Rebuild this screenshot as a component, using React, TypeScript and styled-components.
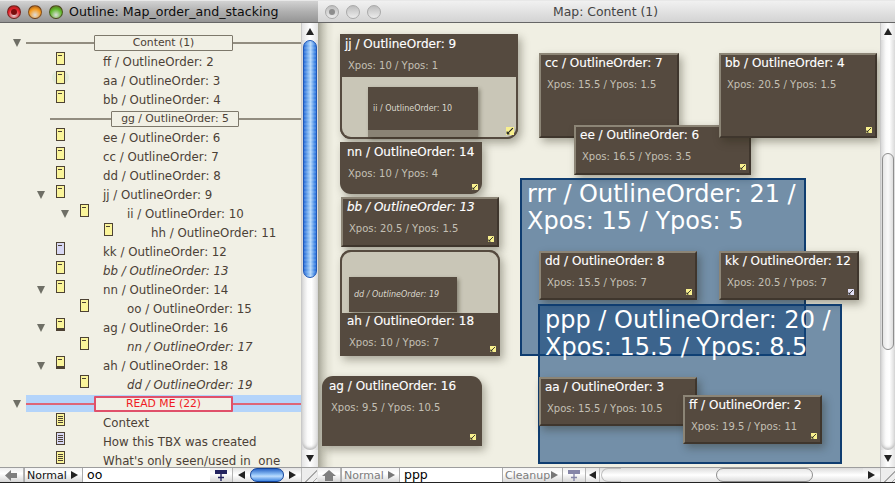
import React from 'react';
import styled, { createGlobalStyle, css } from 'styled-components';

const GlobalStyle = createGlobalStyle`
  html, body { margin: 0; padding: 0; background: #f1f0e5; overflow: hidden; }
  * { box-sizing: border-box; }
  body { font-family: "DejaVu Sans", "Liberation Sans", sans-serif; }
`;

const Screen = styled.div`
  display: flex;
  width: 895px;
  height: 483px;
  overflow: hidden;
`;

const Window = styled.section<{ $w?: number }>`
  display: flex;
  flex-direction: column;
  height: 100%;
  ${p => (p.$w ? `width: ${p.$w}px; flex: none;` : 'flex: 1; min-width: 0;')}
`;

const TitleBar = styled.header<{ $active?: boolean }>`
  flex: none;
  height: 23px;
  display: flex;
  align-items: center;
  padding-left: 7px;
  gap: 7px;
  position: relative;
  border-bottom: 1px solid #666;
  border-top: 1px solid #e8e8e8;
  background: ${p =>
    p.$active
      ? 'linear-gradient(#d2d2d2, #b0b0b0 50%, #959595)'
      : 'linear-gradient(#f1f1f1, #e2e2e2 50%, #d3d3d3)'};
`;

const Light = styled.span<{ $c?: string; $dot?: boolean }>`
  flex: none;
  width: 14px;
  height: 14px;
  border-radius: 50%;
  position: relative;
  border: 1px solid ${p => (p.$c ? 'rgba(60,30,20,.6)' : '#a9a9a9')};
  background: ${p =>
    p.$c
      ? `radial-gradient(circle at 50% 75%, #fff9 0, ${p.$c} 55%, #5a2a1a 115%)`
      : 'linear-gradient(#bdbdbd, #ececec)'};
  ${p =>
    p.$dot &&
    css`
      &::after {
        content: '';
        position: absolute;
        left: 3px;
        top: 3px;
        width: 6px;
        height: 6px;
        border-radius: 50%;
        background: ${p.$c ? '#7a0d0d' : '#8d8d8d'};
      }
    `}
`;

const OutlineTitle = styled.span`
  font-size: 12.6px;
  color: #0c0c0c;
  margin-left: -1px;
  white-space: nowrap;
`;

const MapTitle = styled.span`
  position: absolute;
  left: 0;
  right: 0;
  text-align: center;
  font-size: 12.4px;
  color: #444;
  padding-right: 2px;
`;

const Body = styled.div`
  flex: 1;
  min-height: 0;
  display: flex;
`;

const List = styled.div`
  flex: 1;
  min-width: 0;
  padding-top: 10px;
  overflow: hidden;
  background: #f1f0e5;
`;

const Row = styled.div<{ $depth: number; $italic?: boolean }>`
  height: 19px;
  display: flex;
  align-items: center;
  padding-left: ${p => 13 + p.$depth * 24}px;
  font-size: 11.8px;
  color: #4b4036;
  white-space: pre;
  font-style: ${p => (p.$italic ? 'italic' : 'normal')};
`;

const TriSlot = styled.span<{ $w: number }>`
  flex: none;
  width: ${p => p.$w}px;
  display: flex;
`;

const Twist = styled.span`
  width: 0;
  height: 0;
  border-left: 4.5px solid transparent;
  border-right: 4.5px solid transparent;
  border-top: 8px solid #6f6f66;
`;

const IconSlot = styled.span`
  flex: none;
  width: 47px;
  height: 19px;
  position: relative;
  display: block;
`;

const Halo = styled.span`
  position: absolute;
  left: -4px;
  top: -1px;
  width: 17px;
  height: 15px;
  border-radius: 50%;
  background: #e2eadb;
`;

const NoteSvg = styled.svg`
  position: absolute;
  left: 0;
  top: 0;
  display: block;
`;

const Head = styled.div<{ $depth: number; $read?: boolean; $boxW: number; $lead: number }>`
  height: 19px;
  display: flex;
  align-items: center;
  padding-left: ${p => 13 + p.$depth * 24}px;
  font-size: 10.8px;
  color: ${p => (p.$read ? '#f01b23' : '#4b4036')};
  --rule: ${p => (p.$read ? '#de6577' : '#928d80')};
  --edge: ${p => (p.$read ? '2px solid #e0506a' : '1px solid #7d786b')};
  --lead: ${p => p.$lead}px;
  --box: ${p => p.$boxW}px;
`;

const HeadBand = styled.div<{ $read?: boolean }>`
  flex: 1;
  height: 17px;
  display: flex;
  align-items: center;
  background: ${p => (p.$read ? '#b4d4fa' : 'transparent')};
`;

const Rule = styled.span<{ $fixed?: boolean }>`
  height: 2px;
  background: var(--rule);
  ${p => (p.$fixed ? 'width: var(--lead); flex: none;' : 'flex: 1;')}
`;

const HeadBox = styled.span`
  flex: none;
  width: var(--box);
  height: 16px;
  display: flex;
  align-items: center;
  justify-content: center;
  background: #f1f0e5;
  border: var(--edge);
  border-radius: 1px;
`;

/* scrollbars */
const VTrack = styled.div<{ $w: number }>`
  flex: none;
  width: ${p => p.$w}px;
  display: flex;
  flex-direction: column;
  border-left: 1px solid #c9c9c9;
  background: linear-gradient(90deg, #d8d8d8, #fbfbfb 35%, #fff 60%, #d9d9d9);
`;

const ArrowCell = styled.div`
  flex: none;
  height: 17px;
  display: flex;
  align-items: center;
  justify-content: center;
  background: linear-gradient(90deg, #e4e4e4, #fff 50%, #e4e4e4);
`;

const Arrow = styled.span<{ $dir: 'up' | 'down' | 'left' | 'right'; $c?: string }>`
  width: 0;
  height: 0;
  ${p => {
    const c = p.$c || '#222';
    if (p.$dir === 'up') return `border-left:4px solid transparent;border-right:4px solid transparent;border-bottom:7px solid ${c};`;
    if (p.$dir === 'down') return `border-left:4px solid transparent;border-right:4px solid transparent;border-top:7px solid ${c};`;
    if (p.$dir === 'left') return `border-top:4px solid transparent;border-bottom:4px solid transparent;border-right:7px solid ${c};`;
    return `border-top:4px solid transparent;border-bottom:4px solid transparent;border-left:7px solid ${c};`;
  }}
`;

const VSpace = styled.div<{ $h: number }>`
  flex: none;
  height: ${p => p.$h}px;
`;

const VFill = styled.div`
  flex: 1;
  border-radius: 0 0 8px 8px;
  box-shadow: inset 0 -3px 3px -1px #bbb;
`;

const BlueThumb = styled.div<{ $h: number }>`
  flex: none;
  height: ${p => p.$h}px;
  margin: 0 1px;
  border-radius: 7px;
  border: 1px solid #1f58b8;
  background:
    repeating-linear-gradient(0deg, rgba(255,255,255,.1) 0 2px, transparent 2px 4px),
    linear-gradient(90deg, #2a6fd8, #7fb5f2 35%, #b4d7fb 55%, #4c8fe6 85%, #2a6fd8);
`;

const GrayThumb = styled.div<{ $h: number }>`
  flex: none;
  height: ${p => p.$h}px;
  margin: 0 1px;
  border-radius: 7px;
  border: 1px solid #8e8e8e;
  background: linear-gradient(90deg, #e6e6e6, #fafafa 50%, #dedede);
`;

/* bottom bars */
const Bar = styled.footer`
  flex: none;
  height: 16px;
  display: flex;
  align-items: stretch;
  background: #e6e6e6;
  border-top: 1px solid #9d9d9d;
  border-bottom: 1px solid #222;
  font-size: 11px;
`;

const BarBtn = styled.div<{ $w: number }>`
  flex: none;
  width: ${p => p.$w}px;
  display: flex;
  align-items: center;
  justify-content: center;
  background: linear-gradient(#eee, #fff 40%, #d6d6d6);
  border-right: 1px solid #b4b4b4;
`;

const Popup = styled.div<{ $w: number; $dim?: boolean }>`
  flex: none;
  width: ${p => p.$w}px;
  display: flex;
  align-items: center;
  justify-content: space-between;
  padding: 0 4px 0 2px;
  color: ${p => (p.$dim ? '#7d7d7d' : '#111')};
  background: linear-gradient(#f4f4f4, #fff 40%, #d8d8d8);
  border-right: 1px solid #aaa;
  border-left: 1px solid #aaa;
`;

const Field = styled.div<{ $w: number }>`
  flex: none;
  width: ${p => p.$w}px;
  padding-left: 4px;
  line-height: 14px;
  font-size: 12.5px;
  color: #000;
  background: #fff;
`;

const HTrack = styled.div`
  flex: 1;
  position: relative;
  background: linear-gradient(#dcdcdc, #fff 50%, #e0e0e0);
  border-left: 1px solid #bbb;
`;

const HThumb = styled.div<{ $l: number; $w: number }>`
  position: absolute;
  top: 0;
  bottom: 0;
  left: ${p => p.$l}px;
  width: ${p => p.$w}px;
  border-radius: 7px;
  border: 1px solid #8e8e8e;
  background: linear-gradient(#e8e8e8, #fbfbfb 50%, #dcdcdc);
`;

const HCap = styled.div<{ $l: number; $w: number }>`
  position: absolute;
  top: 0;
  bottom: 0;
  left: ${p => p.$l}px;
  width: ${p => p.$w}px;
  border-radius: 7px 0 0 7px;
  border: 1px solid #bdbdbd;
  border-right: none;
`;

const MiniBlue = styled.div`
  flex: none;
  width: 34px;
  border-radius: 8px;
  border: 1px solid #12449c;
  background: linear-gradient(#2a66c8, #8fc0f6 45%, #bcdcfd 60%, #3f86e2);
`;

const ArrowSlot = styled.div<{ $w: number }>`
  flex: none;
  width: ${p => p.$w}px;
  display: flex;
  align-items: center;
  justify-content: center;
  background: linear-gradient(#e4e4e4, #fff 50%, #dfdfdf);
`;

const Grip = styled.div<{ $w: number }>`
  flex: none;
  width: ${p => p.$w}px;
  background:
    linear-gradient(135deg, #ededed 50%, transparent 50%),
    repeating-linear-gradient(135deg, transparent 0 2px, #a8a8a8 2px 3px, transparent 3px 5px),
    #ededed;
  border-left: 1px solid #bbb;
`;

/* map */
const Canvas = styled.div`
  flex: 1;
  min-width: 0;
  position: relative;
  overflow: hidden;
  background: linear-gradient(90deg, #a5a496 0, #c9c8ba 5px, #e4e3d6 10px, #f0efe3 16px);
`;

type Box = { $x: number; $y: number; $w: number; $h: number };

const place = css<Box>`
  position: absolute;
  left: ${p => p.$x - 318}px;
  top: ${p => p.$y - 23}px;
  width: ${p => p.$w}px;
  height: ${p => p.$h}px;
`;

const Region = styled.div<Box>`
  ${place}
  padding: 1px 5px;
  border: 2px solid #0f3d70;
  background: rgba(17, 67, 120, 0.556);
  color: #fff;
  font-size: 24px;
  line-height: 27px;
`;

const Node = styled.div<Box & { $shape?: 'raised' | 'top' | 'bottom' }>`
  ${place}
  display: flex;
  flex-direction: column;
  color: #fff;
  background: #554a3f;
  box-shadow: 3px 4px 8px rgba(40, 35, 20, 0.36);
  ${p => p.$shape === 'raised' && css`
    border: 2px solid;
    border-color: #8c8576 #3f362d #3f362d #8c8576;
  `}
  ${p => p.$shape === 'bottom' && 'border-radius: 0 0 11px 11px;'}
  ${p => p.$shape === 'top' && 'border-radius: 11px 11px 0 0;'}
`;

const Label = styled.div<{ $italic?: boolean; $pad: number; $top?: number }>`
  flex: none;
  padding: ${p => p.$top ?? 3}px 0 0 ${p => p.$pad}px;
  line-height: 15px;
  font-size: 12px;
  font-weight: 500;
  -webkit-text-stroke: 0.15px #fff;
  white-space: nowrap;
  font-style: ${p => (p.$italic ? 'italic' : 'normal')};
`;

const Coords = styled.div<{ $pad: number; $end?: number }>`
  flex: none;
  padding: 7px 0 ${p => p.$end ?? 0}px ${p => p.$pad}px;
  line-height: 13px;
  font-size: 10px;
  color: #c4c0b5;
  white-space: nowrap;
`;

const Panel = styled.div<{ $bottom?: boolean }>`
  flex: 1;
  position: relative;
  background: #c9c6b7;
  border: 2px solid #554a3f;
  ${p => (p.$bottom
    ? 'margin-top: 5px; border-top: none; border-radius: 0 0 11px 11px;'
    : 'border-bottom: none; border-radius: 11px 11px 0 0;')}
`;

const Inner = styled.div<{ $l: number; $t: number; $w: number; $h: number; $italic?: boolean }>`
  position: absolute;
  left: ${p => p.$l}px;
  top: ${p => p.$t}px;
  width: ${p => p.$w}px;
  height: ${p => p.$h}px;
  overflow: hidden;
  background: #554a3f;
  color: #dcd9ce;
  font-size: 8px;
  white-space: nowrap;
  display: flex;
  align-items: center;
  padding-left: 5px;
  box-shadow: 2px 2px 4px rgba(40, 35, 20, 0.4);
  font-style: ${p => (p.$italic ? 'italic' : 'normal')};
`;

const InnerText = styled.span`
  margin-top: -8px;
`;

const InnerFoot = styled.div`
  position: absolute;
  left: 0;
  right: 0;
  bottom: 0;
  height: 7px;
  background: #8a8375;
`;

const Handle = styled.svg<{ $inset: number; $size: number }>`
  position: absolute;
  right: ${p => p.$inset}px;
  bottom: ${p => p.$inset}px;
  width: ${p => p.$size}px;
  height: ${p => p.$size}px;
`;

function Corner({ fill = '#f8f08e', inset = 4, size = 6 }: { fill?: string; inset?: number; size?: number }) {
  return (
    <Handle viewBox="0 0 7 7" $inset={inset} $size={size}>
      <rect width="7" height="7" fill={fill} />
      <path d="M1 6 L6 1 M1 6 L3 6 M1 6 L1 4" stroke="#222" strokeWidth="1" fill="none" />
    </Handle>
  );
}

type NoteKind = { fill?: string; lines?: boolean; heavy?: boolean };

function NoteIcon({ fill = '#fbf59a', lines, heavy }: NoteKind) {
  return (
    <NoteSvg width="9" height="13" viewBox="0 0 9 13">
      <rect x="0.5" y="0.5" width="8" height="12" fill={fill} stroke="#4d4234" />
      {heavy && <rect x="0" y="10" width="9" height="3" fill="#4d4234" />}
      {lines ? (
        <path d="M2 3.5H7 M2 5.5H7 M2 7.5H7 M2 9.5H7" stroke="#4d4234" strokeWidth="1" />
      ) : (
        <path d="M2 3.5H6" stroke="#4d4234" strokeWidth="1" />
      )}
    </NoteSvg>
  );
}

function PinIcon({ c }: { c: string }) {
  return (
    <svg width="14" height="11" viewBox="0 0 14 11">
      <rect x="1" y="0" width="12" height="4" fill={c} />
      <path d="M7 4V11 M4 7.5H10" stroke={c} strokeWidth="1.4" />
    </svg>
  );
}

function BackIcon({ up }: { up?: boolean }) {
  return (
    <svg width="14" height="11" viewBox="0 0 14 11">
      {up ? (
        <path d="M7 0 L14 6 H11 V11 H3 V6 H0 Z" fill="#7f7f7f" />
      ) : (
        <path d="M0 5.5 L6 0 V3 H12 V8 H6 V11 Z" fill="#7f7f7f" />
      )}
    </svg>
  );
}

type Item = {
  text: string;
  depth?: number;
  open?: boolean;
  italic?: boolean;
  note?: NoteKind;
  halo?: boolean;
};

const lilac = '#d8d8f4';

const topItems: Item[] = [
  { text: 'ff / OutlineOrder: 2' },
  { text: 'aa / OutlineOrder: 3', halo: true },
  { text: 'bb / OutlineOrder: 4' },
];

const midItems: Item[] = [
  { text: 'ee / OutlineOrder: 6' },
  { text: 'cc / OutlineOrder: 7' },
  { text: 'dd / OutlineOrder: 8' },
  { text: 'jj / OutlineOrder: 9', open: true },
  { text: 'ii / OutlineOrder: 10', depth: 2, open: true },
  { text: 'hh / OutlineOrder: 11', depth: 3 },
  { text: 'kk / OutlineOrder: 12', note: { fill: lilac } },
  { text: 'bb / OutlineOrder: 13', italic: true },
  { text: 'nn / OutlineOrder: 14', open: true },
  { text: 'oo / OutlineOrder: 15', depth: 2 },
  { text: 'ag / OutlineOrder: 16', open: true, note: { heavy: true } },
  { text: 'nn / OutlineOrder: 17', depth: 2, italic: true },
  { text: 'ah / OutlineOrder: 18', open: true, note: { heavy: true } },
  { text: 'dd / OutlineOrder: 19', depth: 2, italic: true },
];

const readItems: Item[] = [
  { text: 'Context', note: { lines: true } },
  { text: 'How this TBX was created', note: { lines: true, fill: lilac } },
  { text: "What's only seen/used in  one", note: { lines: true } },
];

function OutlineRow({ text, depth = 1, open, italic, note, halo }: Item) {
  return (
    <Row $depth={depth} $italic={italic}>
      <TriSlot $w={19}>{open && <Twist />}</TriSlot>
      <IconSlot>
        {halo && <Halo />}
        <NoteIcon {...note} />
      </IconSlot>
      {text}
    </Row>
  );
}

type Card = Box & { title: string; pos: string; italic?: boolean; handle?: string };

const raisedBack: Card[] = [
  { $x: 539, $y: 53, $w: 140, $h: 85, title: 'cc / OutlineOrder: 7', pos: 'Xpos: 15.5 / Ypos: 1.5' },
  { $x: 574, $y: 125, $w: 177, $h: 50, title: 'ee / OutlineOrder: 6', pos: 'Xpos: 16.5 / Ypos: 3.5' },
  { $x: 719, $y: 53, $w: 158, $h: 85, title: 'bb / OutlineOrder: 4', pos: 'Xpos: 20.5 / Ypos: 1.5' },
  { $x: 341, $y: 197, $w: 158, $h: 50, title: 'bb / OutlineOrder: 13', pos: 'Xpos: 20.5 / Ypos: 1.5', italic: true },
];

const raisedRrr: Card[] = [
  { $x: 539, $y: 251, $w: 158, $h: 49, title: 'dd / OutlineOrder: 8', pos: 'Xpos: 15.5 / Ypos: 7' },
  { $x: 719, $y: 251, $w: 140, $h: 49, title: 'kk / OutlineOrder: 12', pos: 'Xpos: 20.5 / Ypos: 7', handle: '#e2e0f6' },
];

const raisedPpp: Card[] = [
  { $x: 539, $y: 377, $w: 158, $h: 49, title: 'aa / OutlineOrder: 3', pos: 'Xpos: 15.5 / Ypos: 10.5' },
  { $x: 683, $y: 395, $w: 139, $h: 49, title: 'ff / OutlineOrder: 2', pos: 'Xpos: 19.5 / Ypos: 11' },
];

function Raised({ title, pos, italic, handle, ...box }: Card) {
  return (
    <Node {...box} $shape="raised">
      <Label $pad={4} $top={1} $italic={italic}>{title}</Label>
      <Coords $pad={6}>{pos}</Coords>
      <Corner fill={handle} inset={3} />
    </Node>
  );
}

export default function App() {
  return (
    <Screen>
      <GlobalStyle />
      <Window $w={318}>
        <TitleBar $active>
          <Light $c="#e8202a" $dot />
          <Light $c="#f59a1e" />
          <Light $c="#5fb82a" />
          <OutlineTitle>Outline: Map_order_and_stacking</OutlineTitle>
        </TitleBar>
        <Body>
          <List>
            <Head $depth={0} $lead={68} $boxW={139}>
              <TriSlot $w={13}><Twist /></TriSlot>
              <HeadBand>
                <Rule $fixed />
                <HeadBox>Content (1)</HeadBox>
                <Rule />
              </HeadBand>
            </Head>
            {topItems.map(item => <OutlineRow key={item.text} {...item} />)}
            <Head $depth={1} $lead={61} $boxW={128}>
              <TriSlot $w={13} />
              <HeadBand>
                <Rule $fixed />
                <HeadBox>gg / OutlineOrder: 5</HeadBox>
                <Rule />
              </HeadBand>
            </Head>
            {midItems.map(item => <OutlineRow key={item.text} {...item} />)}
            <Head $depth={0} $lead={68} $boxW={139} $read>
              <TriSlot $w={13}><Twist /></TriSlot>
              <HeadBand $read>
                <Rule $fixed />
                <HeadBox>READ ME (22)</HeadBox>
                <Rule />
              </HeadBand>
            </Head>
            {readItems.map(item => <OutlineRow key={item.text} {...item} />)}
          </List>
          <VTrack $w={17}>
            <ArrowCell><Arrow $dir="up" /></ArrowCell>
            <BlueThumb $h={238} />
            <VFill />
            <ArrowCell><Arrow $dir="down" /></ArrowCell>
          </VTrack>
        </Body>
        <Bar>
          <BarBtn $w={24}><BackIcon /></BarBtn>
          <Popup $w={59}>Normal<Arrow $dir="right" /></Popup>
          <Field $w={127}>oo</Field>
          <BarBtn $w={23}><PinIcon c="#23235f" /></BarBtn>
          <ArrowSlot $w={17}><Arrow $dir="left" /></ArrowSlot>
          <MiniBlue />
          <ArrowSlot $w={17}><Arrow $dir="right" /></ArrowSlot>
          <Grip $w={16} />
        </Bar>
      </Window>

      <Window>
        <TitleBar>
          <Light $dot />
          <Light />
          <Light />
          <MapTitle>Map: Content (1)</MapTitle>
        </TitleBar>
        <Body>
          <Canvas>
            <Node $x={340} $y={34} $w={178} $h={105} $shape="bottom">
              <Label $pad={5}>jj / OutlineOrder: 9</Label>
              <Coords $pad={8}>Xpos: 10 / Ypos: 1</Coords>
              <Panel $bottom>
                <Inner $l={26} $t={10} $w={110} $h={50}>
                  <InnerText>ii / OutlineOrder: 10</InnerText>
                  <InnerFoot />
                </Inner>
                <Corner inset={2} size={8} />
              </Panel>
            </Node>
            <Node $x={340} $y={142} $w={142} $h={52} $shape="bottom">
              <Label $pad={7}>nn / OutlineOrder: 14</Label>
              <Coords $pad={8}>Xpos: 10 / Ypos: 4</Coords>
              <Corner />
            </Node>
            {raisedBack.map(card => <Raised key={card.title} {...card} />)}
            <Node $x={340} $y={250} $w={160} $h={106} $shape="top">
              <Panel>
                <Inner $l={7} $t={25} $w={108} $h={35} $italic>dd / OutlineOrder: 19</Inner>
              </Panel>
              <Label $pad={7} $top={1}>ah / OutlineOrder: 18</Label>
              <Coords $pad={9} $end={7}>Xpos: 10 / Ypos: 7</Coords>
              <Corner />
            </Node>
            <Node $x={322} $y={376} $w={160} $h={70} $shape="top">
              <Label $pad={7}>ag / OutlineOrder: 16</Label>
              <Coords $pad={9}>Xpos: 9.5 / Ypos: 10.5</Coords>
              <Corner inset={6} />
            </Node>
            <Region $x={520} $y={178} $w={286} $h={178}>
              rrr / OutlineOrder: 21 / Xpos: 15 / Ypos: 5
            </Region>
            {raisedRrr.map(card => <Raised key={card.title} {...card} />)}
            <Region $x={538} $y={304} $w={304} $h={160}>
              ppp / OutlineOrder: 20 / Xpos: 15.5 / Ypos: 8.5
            </Region>
            {raisedPpp.map(card => <Raised key={card.title} {...card} />)}
          </Canvas>
          <VTrack $w={15}>
            <ArrowCell><Arrow $dir="up" /></ArrowCell>
            <VSpace $h={113} />
            <GrayThumb $h={197} />
            <VFill />
            <ArrowCell><Arrow $dir="down" /></ArrowCell>
          </VTrack>
        </Body>
        <Bar>
          <BarBtn $w={23}><BackIcon up /></BarBtn>
          <Popup $w={59} $dim>Normal<Arrow $dir="right" $c="#777" /></Popup>
          <Field $w={102}>ppp</Field>
          <Popup $w={61} $dim>Cleanup<Arrow $dir="right" $c="#777" /></Popup>
          <BarBtn $w={23}><PinIcon c="#8585a8" /></BarBtn>
          <ArrowSlot $w={13}><Arrow $dir="left" /></ArrowSlot>
          <HTrack>
            <HCap $l={1} $w={20} />
            <HThumb $l={116} $w={97} />
          </HTrack>
          <ArrowSlot $w={17}><Arrow $dir="right" /></ArrowSlot>
          <Grip $w={15} />
        </Bar>
      </Window>
    </Screen>
  );
}
